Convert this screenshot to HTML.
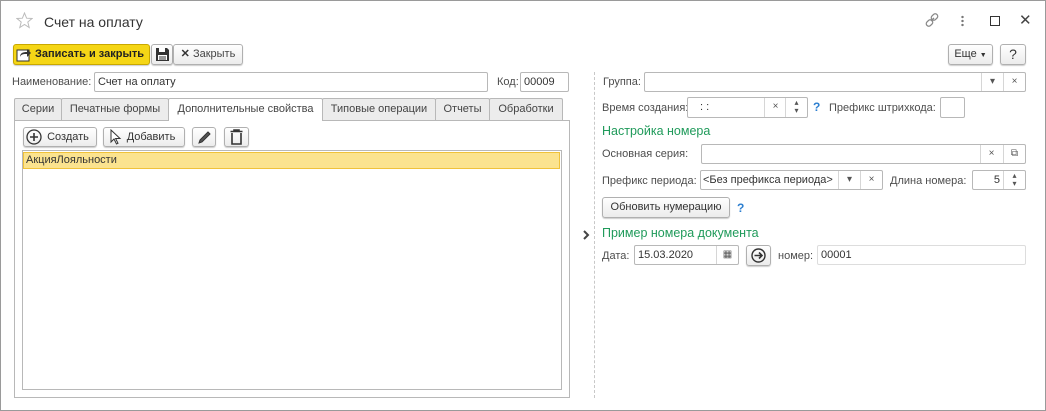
<!DOCTYPE html>
<html><head><meta charset="utf-8"><style>
*{box-sizing:border-box;margin:0;padding:0}
body{width:1046px;height:411px;background:#fff;font-family:"Liberation Sans",Arial,sans-serif;font-size:11px;color:#4d4d4d;position:relative;overflow:hidden}
.a{position:absolute}
.frame{left:0;top:0;width:1046px;height:411px;border:1px solid #9a9a9a}
.lbl{position:absolute;white-space:nowrap;color:#4d4d4d;line-height:14px}
.inp{position:absolute;border:1px solid #b8b8b8;border-radius:2px;background:#fff;color:#333;line-height:18px;padding-left:3px;white-space:nowrap}
.btn{position:absolute;border:1px solid #b0b0b0;border-radius:3px;background:linear-gradient(#fff,#ececec);box-shadow:0 1px 1px rgba(0,0,0,.2);color:#333;text-align:center;white-space:nowrap}
.sb{position:absolute;top:0;bottom:0;border-left:1px solid #d6d6d6;width:22px;text-align:center;color:#555;font-size:10px;line-height:18px}
.tab{position:absolute;top:98px;height:22px;border:1px solid #b8b8b8;border-bottom:none;background:#ececec;color:#444;line-height:21px;text-align:center;border-radius:2px 2px 0 0}
.green{position:absolute;color:#1f9a5a;font-size:12.5px;white-space:nowrap}
.q{position:absolute;color:#2d7fd0;font-weight:bold;font-size:12px}
</style></head><body>
<div class="a frame"></div>
<svg class="a" style="left:16px;top:12px" width="17" height="17" viewBox="0 0 17 17"><path d="M8.5 1 L10.6 6.2 L16 6.5 L11.8 10 L13.2 15.5 L8.5 12.5 L3.8 15.5 L5.2 10 L1 6.5 L6.4 6.2 Z" fill="none" stroke="#bbb" stroke-width="1"/></svg>
<div class="a" style="left:44px;top:14px;font-size:14px;color:#333">Счет на оплату</div>
<svg class="a" style="left:924px;top:12px" width="16" height="16" viewBox="0 0 16 16" fill="none" stroke="#888" stroke-width="1.3"><path d="M7 9 L10 6"/><rect x="8" y="1.5" width="5" height="7" rx="2.5" transform="rotate(45 10.5 5)"/><rect x="3" y="7.5" width="5" height="7" rx="2.5" transform="rotate(45 5.5 11)"/></svg>
<div class="a" style="left:961px;top:15px;width:3px;height:12px;background:radial-gradient(circle,#777 1.2px,transparent 1.3px) 0 0/3px 4px"></div>
<div class="a" style="left:990px;top:16px;width:10px;height:10px;border:1.3px solid #333"></div>
<div class="a" style="left:1019px;top:11px;font-size:15px;color:#444">✕</div>
<!-- toolbar -->
<div class="btn" style="left:13px;top:44px;width:137px;height:21px;background:#f5d616;border-color:#c9a800;color:#222;font-weight:bold;line-height:19px;padding-left:21px;text-align:left">Записать и закрыть</div>
<svg class="a" style="left:16px;top:47px" width="16" height="15" viewBox="0 0 16 15"><rect x="1" y="3" width="12" height="11" fill="#fff" stroke="#333"/><path d="M4 10 C4 6 7 5 11 5 L11 2 L15 6 L11 10 L11 7 C8 7 5 7 4 10Z" fill="#333"/></svg>
<div class="btn" style="left:151px;top:44px;width:22px;height:21px"></div>
<svg class="a" style="left:155px;top:47px" width="15" height="15" viewBox="0 0 15 15"><path d="M1 1H12L14 3V14H1Z" fill="#333"/><rect x="4" y="1" width="6" height="4" fill="#fff"/><rect x="3" y="8" width="9" height="5" fill="#fff"/><path d="M4 10H11M4 12H11" stroke="#333"/></svg>
<div class="btn" style="left:173px;top:44px;width:70px;height:21px;line-height:19px;color:#444"><b style="color:#333">✕</b> Закрыть</div>
<div class="btn" style="left:948px;top:44px;width:45px;height:21px;line-height:19px">Еще <span style="font-size:7px">▼</span></div>
<div class="btn" style="left:1000px;top:44px;width:26px;height:21px;line-height:19px;font-size:14px">?</div>
<!-- name -->
<div class="lbl" style="left:12px;top:75px">Наименование:</div>
<div class="inp" style="left:94px;top:72px;width:394px;height:20px">Счет на оплату</div>
<div class="lbl" style="left:497px;top:75px">Код:</div>
<div class="inp" style="left:520px;top:72px;width:49px;height:20px">00009</div>
<!-- tabs -->
<div class="tab" style="left:14px;width:48px">Серии</div>
<div class="tab" style="left:61px;width:108px">Печатные формы</div>
<div class="tab" style="left:168px;width:155px;background:#fff;height:23px;z-index:2">Дополнительные свойства</div>
<div class="tab" style="left:322px;width:114px">Типовые операции</div>
<div class="tab" style="left:435px;width:55px">Отчеты</div>
<div class="tab" style="left:489px;width:74px">Обработки</div>
<div class="a" style="left:14px;top:120px;width:556px;height:278px;border:1px solid #b8b8b8"></div>
<div class="btn" style="left:23px;top:127px;width:74px;height:20px;line-height:18px;padding-left:16px">Создать</div>
<svg class="a" style="left:26px;top:129px" width="16" height="16" viewBox="0 0 16 16"><circle cx="8" cy="8" r="7" fill="none" stroke="#333" stroke-width="1.3"/><path d="M8 4V12M4 8H12" stroke="#333" stroke-width="1.6"/></svg>
<div class="btn" style="left:103px;top:127px;width:82px;height:20px;line-height:18px;padding-left:14px">Добавить</div>
<svg class="a" style="left:110px;top:129px" width="12" height="16" viewBox="0 0 12 16"><path d="M1 1V13L4 10L6.5 15L8 14.3L5.6 9.5H10Z" fill="#fff" stroke="#333"/></svg>
<div class="btn" style="left:192px;top:127px;width:24px;height:20px"></div>
<svg class="a" style="left:197px;top:129px" width="15" height="16" viewBox="0 0 15 16"><path d="M3 11L11 3L13 5L5 13L2 14Z" fill="#555" stroke="#333"/></svg>
<div class="btn" style="left:224px;top:127px;width:25px;height:20px"></div>
<svg class="a" style="left:229px;top:129px" width="15" height="16" viewBox="0 0 15 16"><path d="M1.5 2.5H13.5M5 2.5V1H10V2.5M3 4V15H12V4" fill="none" stroke="#333" stroke-width="1.6"/></svg>
<div class="a" style="left:22px;top:150px;width:540px;height:240px;border:1px solid #b8b8b8"></div>
<div class="a" style="left:23px;top:152px;width:537px;height:17px;background:#fbe38f;border:1px solid #f0c23a;color:#333;line-height:15px;padding-left:2px">АкцияЛояльности</div>
<!-- splitter -->
<div class="a" style="left:594px;top:72px;height:326px;border-left:1px dashed #c8c8c8"></div>
<svg class="a" style="left:582px;top:230px" width="8" height="10" viewBox="0 0 8 10"><path d="M2 1L6 5L2 9" fill="none" stroke="#444" stroke-width="2"/></svg>
<!-- right -->
<div class="lbl" style="left:603px;top:75px">Группа:</div>
<div class="inp" style="left:644px;top:72px;width:382px;height:20px"><span class="sb" style="right:22px">▾</span><span class="sb" style="right:0">×</span></div>
<div class="lbl" style="left:602px;top:101px">Время создания:</div>
<div class="inp" style="left:687px;top:97px;width:121px;height:21px;padding-left:12px">: :<span class="sb" style="right:21px">×</span><span class="sb" style="right:0;line-height:8px;font-size:8px;padding-top:1px">▴<br>▾</span></div>
<div class="q" style="left:813px;top:100px">?</div>
<div class="lbl" style="left:829px;top:101px">Префикс штрихкода:</div>
<div class="inp" style="left:940px;top:97px;width:25px;height:21px"></div>
<div class="green" style="left:602px;top:124px">Настройка номера</div>
<div class="lbl" style="left:602px;top:147px">Основная серия:</div>
<div class="inp" style="left:701px;top:144px;width:325px;height:20px"><span class="sb" style="right:23px">×</span><span class="sb" style="right:0">⧉</span></div>
<div class="lbl" style="left:602px;top:174px">Префикс периода:</div>
<div class="inp" style="left:700px;top:170px;width:183px;height:20px;padding-left:2px">&lt;Без префикса периода&gt;<span class="sb" style="right:22px">▾</span><span class="sb" style="right:0">×</span></div>
<div class="lbl" style="left:890px;top:174px">Длина номера:</div>
<div class="inp" style="left:972px;top:170px;width:54px;height:20px;text-align:right;padding-right:25px">5<span class="sb" style="right:0;line-height:8px;font-size:8px;padding-top:1px">▴<br>▾</span></div>
<div class="btn" style="left:602px;top:197px;width:128px;height:21px;line-height:19px">Обновить нумерацию</div>
<div class="q" style="left:737px;top:201px">?</div>
<div class="green" style="left:602px;top:226px">Пример номера документа</div>
<div class="lbl" style="left:602px;top:249px">Дата:</div>
<div class="inp" style="left:634px;top:245px;width:105px;height:20px">15.03.2020<span class="sb" style="right:0;font-size:10px">▦</span></div>
<div class="btn" style="left:746px;top:245px;width:25px;height:21px"></div>
<svg class="a" style="left:750px;top:248px" width="17" height="15" viewBox="0 0 17 15"><circle cx="8.5" cy="7.5" r="6.5" fill="none" stroke="#333" stroke-width="1.4"/><path d="M4.5 7.5H12M9 4.5L12 7.5L9 10.5" fill="none" stroke="#333" stroke-width="1.6"/></svg>
<div class="lbl" style="left:778px;top:249px">номер:</div>
<div class="inp" style="left:817px;top:245px;width:209px;height:20px;border-color:#ddd">00001</div>
</body></html>
